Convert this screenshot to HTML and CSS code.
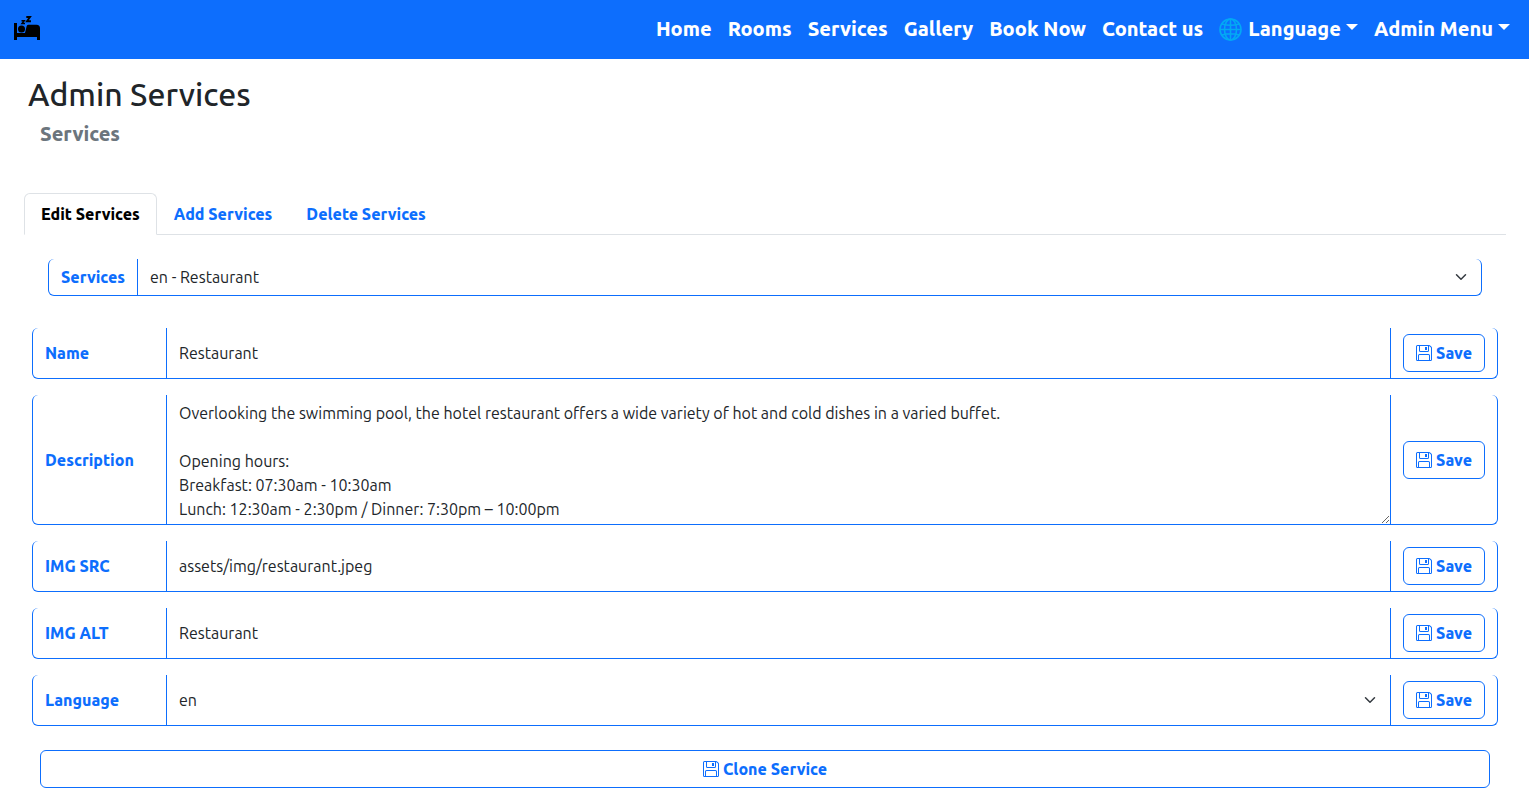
FILE: index.html
```html
<!DOCTYPE html>
<html lang="en">
<head>
<meta charset="utf-8">
<title>Admin Services</title>
<link rel="stylesheet" href="styles.css">
</head>
<body>
<svg class="sprite" aria-hidden="true">
  <symbol id="floppy" viewBox="0 0 16 16"><path d="M11 2H9v3h2z"/><path d="M1.5 0h11.586a1.5 1.5 0 0 1 1.06.44l1.415 1.414A1.5 1.5 0 0 1 16 2.914V14.5a1.5 1.5 0 0 1-1.5 1.5h-13A1.5 1.5 0 0 1 0 14.5v-13A1.5 1.5 0 0 1 1.5 0M1 1.5v13a.5.5 0 0 0 .5.5H2v-4.5A1.5 1.5 0 0 1 3.5 9h9a1.5 1.5 0 0 1 1.5 1.5V15h.5a.5.5 0 0 0 .5-.5V2.914a.5.5 0 0 0-.146-.353l-1.415-1.415A.5.5 0 0 0 13.086 1H13v4.5A1.5 1.5 0 0 1 11.5 7h-7A1.5 1.5 0 0 1 3 5.5V1H1.5a.5.5 0 0 0-.5.5m3 4a.5.5 0 0 0 .5.5h7a.5.5 0 0 0 .5-.5V1H4zM3 15h10v-4.5a.5.5 0 0 0-.5-.5h-9a.5.5 0 0 0-.5.5z"/></symbol>
  <symbol id="chevron" viewBox="0 0 16 16"><path fill="none" stroke="#343a40" stroke-linecap="round" stroke-linejoin="round" stroke-width="2" d="m2 5 6 6 6-6"/></symbol>
</svg>
<header class="navbar">
  <a class="brand" href="#" aria-label="Hotel">
    <svg width="26" height="24" viewBox="0 0 26 24"><path d="M0 7h3v10h8l1.700-7q.5-1.200 1.800-1.200h8a3.500 3.500 0 0 1 3.500 3.500V24h-3v-3H3v3H0z"/><circle cx="7.500" cy="13" r="3.500"/><path fill="none" stroke="#000" stroke-width="1.500" d="M7.500 4.700h2.700L8 7.500h3"/><path fill="none" stroke="#000" stroke-width="1.900" d="M12.300 1h3.700l-3 4.200h4"/></svg>
  </a>
  <nav class="menu">
    <a href="#">Home</a>
    <a href="#">Rooms</a>
    <a href="#">Services</a>
    <a href="#">Gallery</a>
    <a href="#">Book Now</a>
    <a href="#">Contact us</a>
    <a class="dropdown" href="#"><svg class="globe" viewBox="0 0 23 23"><g fill="none" stroke="#03a9f4" stroke-width="1.600"><circle cx="11.500" cy="11.500" r="10.500"/><ellipse cx="11.500" cy="11.500" rx="6" ry="10.500"/><path d="M11.500 1v21M1 11.500h21M3 6q8.500 2.500 17 0M3 17q8.500-2.500 17 0"/></g></svg>Language</a>
    <a class="dropdown" href="#">Admin Menu</a>
  </nav>
</header>
<main class="page">
  <h2 class="title">Admin Services</h2>
  <h5 class="subtitle">Services</h5>
  <nav class="tabs">
    <button class="tab active" type="button">Edit Services</button>
    <button class="tab" type="button">Add Services</button>
    <button class="tab" type="button">Delete Services</button>
  </nav>
  <form class="panel">
    <div class="group picker">
      <label class="label" for="service">Services</label>
      <div class="field select"><select id="service"><option>en - Restaurant</option></select><svg class="chevron"><use href="#chevron"/></svg></div>
    </div>
    <div class="group">
      <label class="label" for="name">Name</label>
      <input class="field" id="name" type="text" value="Restaurant">
      <div class="action"><button class="button" type="button"><svg class="icon"><use href="#floppy"/></svg>Save</button></div>
    </div>
    <div class="group">
      <label class="label" for="description">Description</label>
      <textarea class="field" id="description" spellcheck="false">Overlooking the swimming pool, the hotel restaurant offers a wide variety of hot and cold dishes in a varied buffet.

Opening hours:
Breakfast: 07:30am - 10:30am
Lunch: 12:30am - 2:30pm / Dinner: 7:30pm – 10:00pm</textarea>
      <div class="action"><button class="button" type="button"><svg class="icon"><use href="#floppy"/></svg>Save</button></div>
    </div>
    <div class="group">
      <label class="label" for="src">IMG SRC</label>
      <input class="field" id="src" type="text" value="assets/img/restaurant.jpeg">
      <div class="action"><button class="button" type="button"><svg class="icon"><use href="#floppy"/></svg>Save</button></div>
    </div>
    <div class="group">
      <label class="label" for="alt">IMG ALT</label>
      <input class="field" id="alt" type="text" value="Restaurant">
      <div class="action"><button class="button" type="button"><svg class="icon"><use href="#floppy"/></svg>Save</button></div>
    </div>
    <div class="group">
      <label class="label" for="language">Language</label>
      <div class="field select"><select id="language"><option>en</option></select><svg class="chevron"><use href="#chevron"/></svg></div>
      <div class="action"><button class="button" type="button"><svg class="icon"><use href="#floppy"/></svg>Save</button></div>
    </div>
    <button class="button clone" type="button"><svg class="icon"><use href="#floppy"/></svg>Clone Service</button>
  </form>
</main>
</body>
</html>
```
FILE: styles.css
```css
* { box-sizing: border-box; }
body {
  margin: 0;
  font: 430 16px/24px Ubuntu, "Noto Sans", sans-serif;
  color: #212529;
  background: #fff;
}
button, input, select, textarea { font: inherit; color: inherit; margin: 0; }
.sprite { display: none; }

.navbar {
  display: flex;
  align-items: center;
  justify-content: space-between;
  height: 59px;
  padding: 0 19px 3px 14px;
  background: #0d6efd;
}
.brand { display: flex; }
.menu { display: flex; gap: 16px; padding-top: 2px; font-size: 20px; line-height: 30px; font-weight: 800; }
.menu a { color: #fff; text-decoration: none; white-space: nowrap; }
.menu .dropdown { display: flex; align-items: center; }
.dropdown::after {
  content: "";
  margin: 0 0 4px 5px;
  border: 6px solid transparent;
  border-top-color: #fff;
  border-bottom: 0;
}
.globe { width: 23px; height: 23px; margin-right: 6px; }

.page { padding: 16px 23px 16px 24px; }
.title { margin: 0 4px 8px; font-size: 32px; line-height: 38px; font-weight: 550; }
.subtitle { margin: 0 16px; font-size: 20px; line-height: 26px; font-weight: 800; color: #6c757d; }

.tabs { display: flex; margin-top: 46px; border-bottom: 1px solid #dee2e6; }
.tab {
  padding: 8px 16px;
  margin-bottom: -1px;
  border: 1px solid transparent;
  border-radius: 6px 6px 0 0;
  background: none;
  font-weight: 800;
  color: #0d6efd;
}
.tab.active { color: #000; background: #fff; border-color: #dee2e6 #dee2e6 #fff; }

.panel { display: flex; flex-direction: column; gap: 16px; padding: 24px 8px; }
.group { display: flex; min-height: 51px; }
.label {
  display: flex;
  align-items: center;
  flex: none;
  width: 135px;
  padding: 0 12px;
  border: solid #0d6efd;
  border-width: 0 1px 1px;
  border-radius: 6px 0 0 6px;
  font-weight: 800;
  color: #0d6efd;
}
.field {
  flex: 1;
  min-width: 0;
  padding: 0 12px;
  border: 0 solid #0d6efd;
  border-bottom-width: 1px;
  background: #fff;
  outline: 0;
}
textarea.field { height: 130px; padding: 6px 12px 2px; overflow: hidden; resize: vertical; }
.select { display: flex; position: relative; padding: 0; }
.select select { flex: 1; padding: 0 36px 0 12px; border: 0; background: none; appearance: none; outline: 0; }
.chevron { position: absolute; right: 12px; top: calc(50% - 6px); width: 16px; height: 12px; pointer-events: none; }
.action {
  display: flex;
  align-items: center;
  flex: none;
  width: 108px;
  padding: 0 12px;
  border: solid #0d6efd;
  border-width: 0 1px 1px;
  border-radius: 0 6px 6px 0;
}
.button {
  display: flex;
  align-items: center;
  justify-content: center;
  gap: 4px;
  flex: 1;
  height: 38px;
  padding: 0;
  border: 1px solid #0d6efd;
  border-radius: 6px;
  background: #fff;
  font-weight: 800;
  color: #0d6efd;
}
.icon { width: 16px; height: 16px; fill: currentColor; }
.picker { min-height: 37px; margin: 0 16px 16px; }
.picker .label { width: 90px; }
.picker .field { border-right-width: 1px; border-radius: 0 6px 6px 0; }
.clone { flex: none; margin: 8px 8px 0; }
```
